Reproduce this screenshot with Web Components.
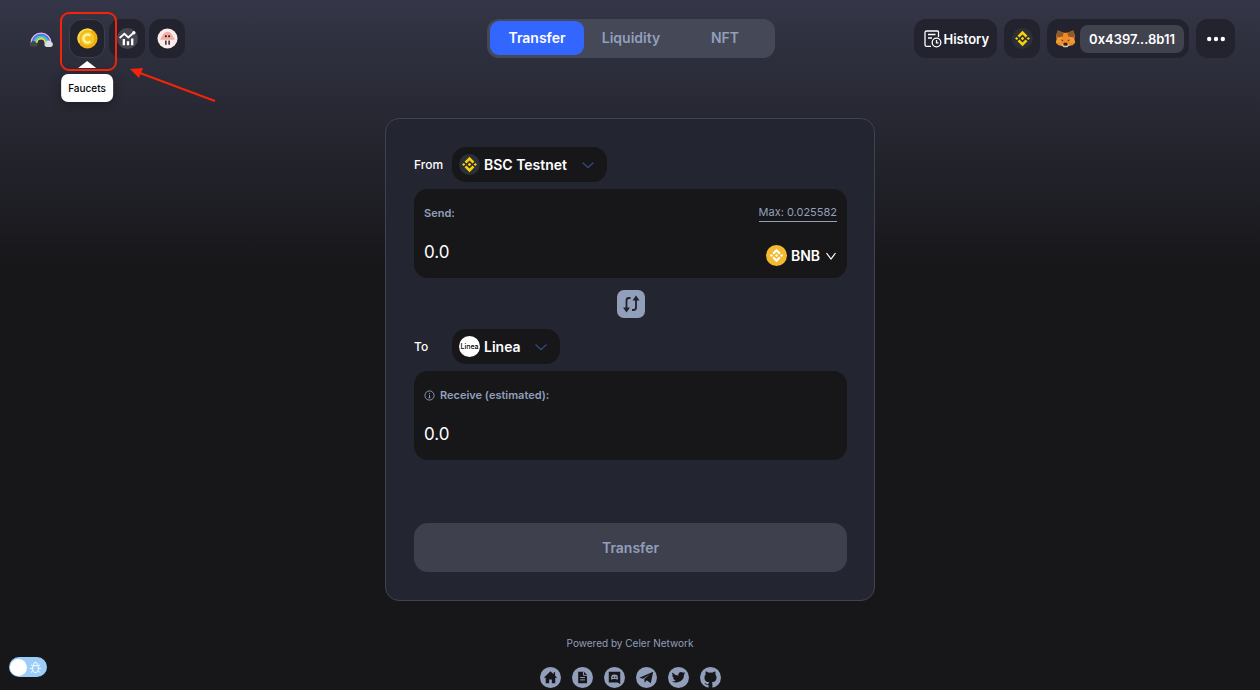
<!DOCTYPE html>
<html lang="en">
<head>
<meta charset="utf-8">
<meta name="viewport" content="width=device-width, initial-scale=1">
<title>cBridge</title>
<style>
  body {
    margin: 0;
    font-family: Inter, "Liberation Sans", sans-serif;
    color: #fff;
    background: #17171a;
  }
</style>
</head>
<body>
<bridge-app></bridge-app>

<script>
const icons = {
  rainbow: `<svg viewBox="0 0 24 18"><g fill="none" stroke-width="1.500"><path d="M2.200 13a9.800 9.800 0 0 1 19.600 0" stroke="#e3b5f7"/><path d="M3.600 13a8.400 8.400 0 0 1 16.800 0" stroke="#4f7bf0"/><path d="M5 13a7 7 0 0 1 14 0" stroke="#3fc3f5"/><path d="M6.400 13a5.600 5.600 0 0 1 11.200 0" stroke="#6fdc9a"/><path d="M7.800 13a4.200 4.200 0 0 1 8.400 0" stroke="#f5e65a"/></g><path d="M2.500 16.500a2.200 2.200 0 0 1-.3-4.300 2.800 2.800 0 0 1 5 .5 2 2 0 0 1 .3 3.800z" fill="#45464b"/><path d="M17.500 17a2.500 2.500 0 0 1-.5-4.800 3 3 0 0 1 5-.5 2.800 2.800 0 0 1 0 5.300z" fill="#dcdde2"/></svg>`,
  coin: `<svg viewBox="0 0 22 22"><circle cx="11" cy="11" r="10.500" fill="#f0b20d"/><path d="M3 4a10.500 10.500 0 0 1 13-2L2 16A10.500 10.500 0 0 1 3 4z" fill="#fbd84b"/><circle cx="11" cy="11" r="8" fill="#f7c524" stroke="#e5a008" stroke-width=".8"/><path d="M14 8a4.200 4.200 0 1 0 0 6" fill="none" stroke="#fff3a8" stroke-width="2.400"/></svg>`,
  chart: `<svg viewBox="0 0 20 20"><circle cx="10" cy="10" r="10" fill="#45464f"/><g fill="none" stroke="#fff"><path d="M2.500 9.500L7 5.500l3.800 3.500 5-4.500" stroke-width="1.700"/><path d="M6.500 10.500v6M10.500 12.500v4M14.500 10v6.500" stroke-width="2.200"/></g><circle cx="16" cy="4.500" r="1.600" fill="#fff"/></svg>`,
  jelly: `<svg viewBox="0 0 22 22"><circle cx="11" cy="11" r="10.500" fill="#fbeceb"/><path d="M6.500 6.500Q8 3.800 11 3.800t4.500 2.700L18.800 12.300H3.200z" fill="#f2aca3"/><path d="M9.300 13v4.500M12.700 13v4.500" stroke="#222" stroke-width="1.500"/><circle cx="9.300" cy="8.700" r="1.100" fill="#222"/><circle cx="12.700" cy="8.700" r="1.100" fill="#222"/></svg>`,
  history: `<svg viewBox="0 0 18 18" fill="none" stroke="#fff" stroke-width="1.300"><path d="M7 16.300H2.500A1.500 1.500 0 0 1 1 14.800V2.500A1.500 1.500 0 0 1 2.500 1h11A1.200 1.200 0 0 1 14.500 2.200V7M4 4.500h7.500M4 8h4"/><circle cx="12.500" cy="12.500" r="4.300"/><path d="M12.500 10v2.800h2"/></svg>`,
  bnbDark: `<svg viewBox="0 0 22 22"><circle cx="11" cy="11" r="11" fill="#2b2f36"/><path d="M7.800 10L11 6.800l3.200 3.200 2-2L11 2.900 5.800 8zM7.800 12L11 15.200l3.200-3.200 2 2L11 19.100 5.800 14zM3.200 11l1.700-1.700L6.600 11l-1.700 1.700zM15.400 11l1.700-1.700 1.700 1.700-1.700 1.700zM11 9.100l1.900 1.900-1.900 1.900L9.100 11z" fill="#f9d10c"/></svg>`,
  bnb: `<svg viewBox="0 0 22 22"><circle cx="11" cy="11" r="11" fill="#f3ba2f"/><path d="M8.300 9.900L11 7.200l2.700 2.700 1.600-1.600L11 4 6.700 8.300zM8.300 12.100l2.700 2.700 2.700-2.700 1.600 1.600L11 18l-4.300-4.300zM4 11l1.600-1.600L7.200 11l-1.600 1.600zM14.800 11l1.600-1.600L18 11l-1.600 1.600zM11 9.400l1.600 1.600-1.600 1.600L9.400 11z" fill="#fff"/></svg>`,
  fox: `<svg viewBox="0 0 22 20"><path d="M3 1.500L9 4h4l6-2.500L21 7l-1 4 1.200 3.500-2.700 2.500-4 .3-1.500 1.700H9l-1.500-1.700-4-.3-2.700-2.500L2 11 1 7z" fill="#ee8a27"/><path d="M3 1.500L9 4 8 9 2.500 9 1 6.500zM19 1.500L13 4l1 5 5.500 0L21 6.500z" fill="#8f5a2c"/><path d="M2 9.500L8 8l-.7 6L1 14.500zM20 9.500L14 8l.7 6 6.300.5z" fill="#f79a32"/><path d="M5.800 11l2.800.6-.5 1.500zM16.200 11l-2.800.6.5 1.500z" fill="#38424e"/><path d="M4.500 16.800l3.500-.6L9 17.800h4l1-1.600 3.500.6-3 .9-1.600 1.500H9.100L7.500 17.700z" fill="#d9c6b7"/><path d="M8.800 15.500l.8-1h2.800l.8 1-.5 1.800H9.300z" fill="#28231f"/></svg>`,
  dots: `<svg viewBox="0 0 20 20" fill="#fff"><circle cx="3.200" cy="10" r="2.200"/><circle cx="10" cy="10" r="2.200"/><circle cx="16.800" cy="10" r="2.200"/></svg>`,
  chevron: `<svg viewBox="0 0 14 14" fill="none" stroke="currentColor" stroke-width="1.300"><path d="M1.500 4.500L7 9.500l5.500-5"/></svg>`,
  chevronSmall: `<svg viewBox="0 0 12 12" fill="none" stroke="currentColor" stroke-width="1.200"><path d="M1.500 3L6 9l4.500-6"/></svg>`,
  swap: `<svg viewBox="0 0 28 28" fill="none" stroke="#20222d" stroke-width="1.800"><path d="M13.500 8H12q-2.500 0-2.500 2.500V18M15 20h1.500q2.500 0 2.500-2.500V10"/><path d="M6 17.500h7l-3.500 5zM15.500 10.500h7l-3.500-5z" fill="#20222d" stroke="none"/></svg>`,
  info: `<svg viewBox="0 0 12 12" fill="none" stroke="currentColor"><circle cx="6" cy="6" r="5"/><path d="M6 5.200v3.300M6 3.200v1.100M5 8.500h2"/></svg>`,
  home: `<path d="M11 4.500l-7 6.700h2V17h3.600v-4h2.800v4H16v-5.800h2l-2.200-2.100V5.500h-1.500v2.100z"/>`,
  doc: `<path d="M6.500 5h6l3.200 3.200V17H6.500z"/><path d="M12 5v3.700h3.700M8.500 11h5M8.500 13.500h5" fill="none" stroke="#929fba"/>`,
  discord: `<path d="M5 5h12v13l-2.500-1.800H5z"/><path d="M7.500 13q-.6-2.800.8-4.700 2.700-.8 5.400 0 1.400 1.900.8 4.700-1 .5-1.800-.4H9.300q-.8.900-1.800.4z" fill="#929fba"/><circle cx="9.600" cy="10.800" r=".8"/><circle cx="12.400" cy="10.800" r=".8"/>`,
  telegram: `<path d="M3.500 11.300L18 5l-2.500 12-4.300-3-2 2.500-.6-3.800 6-5-7.300 4.500z"/>`,
  twitter: `<path d="M4.500 5.800q2.700 3 6.300 3.100c-.4-3.800 3.200-4.700 5-2.900l2-.7-1.100 1.700 1.500-.4-1.500 1.600c.2 6.500-6.600 9.700-12.700 6.900q2.700 0 4-1.300-2.200-.4-2.800-2.200h1.300q-2.100-.9-2.200-3l1.200.3q-1.900-1.600-1-3.100z"/>`,
  github: `<path d="M9 22v-3.200c-3 .6-3.500-1.500-4.500-2 1.700-.3 1.800 1.500 3.300 1.200.5 0 1-.2 1.200-.5l.5-1.500c-3.700-.5-4.800-2.400-4.800-5 0-1.400.5-2.400 1.200-3.200-.3-1-.2-2 .2-3 1.300 0 2.200.7 3 1.200q1.900-.5 3.800 0c.8-.5 1.700-1.200 3-1.200.4 1 .5 2 .2 3 .7.800 1.200 1.800 1.200 3.200 0 2.600-1.100 4.500-4.800 5l.5 1.500V22z"/>`,
  bug: `<svg viewBox="0 0 14 14" fill="none" stroke="#fff"><path d="M4 5h6v4.500a3 3 0 0 1-6 0zM5 5V3.500a2 2 0 0 1 4 0V5M4 8H1M13 8h-3M4 5.500L2 4M10 5.500L12 4M4 10.500L2 12.500M10 10.500l2 2"/></svg>`,
};

const base = `
  *, *::before { box-sizing: border-box; }
  svg { display: block; }
  button, input, select {
    margin: 0; padding: 0; border: 0; background: none;
    font: inherit; color: inherit;
  }
  button { cursor: pointer; }
`;

function define(name, css, html) {
  customElements.define(name, class extends HTMLElement {
    constructor() {
      super();
      this.attachShadow({ mode: "open" });
    }

    connectedCallback() {
      const body = typeof html === "function" ? html(this) : html;
      this.shadowRoot.innerHTML = `<style>${base}${css}</style>${body}`;
    }
  });
}

define("ui-icon", `
  :host { display: block; flex: none; width: 21px; height: 21px; }
  svg { width: 100%; height: 100%; }
`, (el) => icons[el.getAttribute("name")]);

define("icon-button", `
  :host { display: block; }
  button {
    display: flex; align-items: center; justify-content: center; gap: 1px;
    min-width: 36px; height: 39px; padding: 0 6px;
    border-radius: 12px; background: #22232e;
    font-size: 13px; font-weight: 600; line-height: 20px;
  }
  :host([active]) button { border: 1px solid #3d3f4d; }
  :host([wide]) button { min-width: 39px; }
  :host([text]) button { padding: 0 8px; }
`, (el) => `<button type="button" aria-label="${el.getAttribute("label")}"><slot></slot></button>`);

define("app-links", `
  :host { display: flex; align-items: center; gap: 4px; padding-left: 2px; }
  .logo { width: 24px; height: 18px; margin-right: 12px; }
  .faucet { position: relative; }
  .tip {
    position: absolute; top: 55px; left: 50%; transform: translateX(-50%);
    padding: 6px 7px; border-radius: 7px; background: #fff; color: #000;
    font-size: 10px; font-weight: 500; line-height: 16px;
    box-shadow: 0 3px 12px rgba(0, 0, 0, .3);
  }
  .tip::before {
    content: ""; position: absolute; top: -13px; left: 50%; margin-left: -9px;
    border: 9px solid transparent; border-top: 0; border-bottom: 7px solid #fff;
  }
  .mark {
    position: absolute; top: -7px; left: -9px; width: 57px; height: 59px;
    border: 2px solid #f5230a; border-radius: 9px; z-index: 1;
  }
  .arrow { position: absolute; top: 48px; left: 61px; width: 88px; height: 36px; }
`, `
  <ui-icon class="logo" name="rainbow"></ui-icon>
  <div class="faucet">
    <icon-button active label="Faucets"><ui-icon name="coin"></ui-icon></icon-button>
    <div class="tip" role="tooltip">Faucets</div>
    <div class="mark"></div>
    <svg class="arrow" viewBox="0 0 88 36"><path d="M10 6l75 28" stroke="#f5230a" stroke-width="2"/><path d="M0 2l13-1-4 10z" fill="#f5230a"/></svg>
  </div>
  <icon-button label="Analytics"><ui-icon name="chart"></ui-icon></icon-button>
  <icon-button label="Jellyfish"><ui-icon name="jelly"></ui-icon></icon-button>
`);

define("nav-tabs", `
  :host {
    display: grid; grid-template-columns: repeat(3, 94px);
    padding: 2px 3px 3px; border-radius: 12px; background: #444857;
  }
  button {
    height: 34px; border-radius: 9px; color: #929fba;
    font-size: 14px; font-weight: 600; line-height: 20px;
  }
  .on { background: #3366ff; color: #fff; }
`, `
  <button type="button" class="on">Transfer</button>
  <button type="button">Liquidity</button>
  <button type="button">NFT</button>
`);

define("wallet-bar", `
  :host { display: flex; justify-content: flex-end; gap: 7px; }
  .history { width: 18px; height: 18px; margin-left: 2px; }
  .wallet {
    display: flex; align-items: center; gap: 4px; height: 39px;
    padding: 0 5px 0 8px; border-radius: 12px; background: #22232e;
  }
  .account {
    height: 28px; padding: 0 9px; border-radius: 8px; background: #40424e;
    font-size: 13px; font-weight: 600; line-height: 20px;
  }
  .dots { width: 20px; height: 20px; }
`, `
  <icon-button text label="History"><ui-icon class="history" name="history"></ui-icon>History</icon-button>
  <icon-button label="Network"><ui-icon name="bnbDark"></ui-icon></icon-button>
  <div class="wallet">
    <ui-icon name="fox"></ui-icon>
    <button type="button" class="account">0x4397...8b11</button>
  </div>
  <icon-button wide label="More"><ui-icon class="dots" name="dots"></ui-icon></icon-button>
`);

define("chain-row", `
  :host { display: flex; align-items: center; }
  .name { width: 38px; font-size: 12px; font-weight: 500; line-height: 20px; }
  .pill {
    display: flex; align-items: center; gap: 4px; height: 35px;
    padding: 0 12px 0 7px; border-radius: 14px; background: #17171a;
  }
  select { appearance: none; font-size: 14px; font-weight: 600; line-height: 20px; }
  .down { width: 14px; height: 14px; margin-left: 9px; color: #36467a; }
`, (el) => `
  <label class="name" for="chain">${el.getAttribute("label")}</label>
  <div class="pill">
    <slot></slot>
    <select id="chain"><option>${el.getAttribute("chain")}</option></select>
    <ui-icon class="down" name="chevron"></ui-icon>
  </div>
`);

define("amount-box", `
  :host {
    display: flex; justify-content: space-between; height: 89px;
    padding: 15px 10px 12px; border-radius: 14px; background: #17171a;
  }
  .left { display: flex; flex: 1; flex-direction: column; justify-content: space-between; min-width: 0; }
  label {
    display: flex; align-items: center; gap: 5px; color: #929fba;
    font-size: 11px; font-weight: 600; line-height: 18px;
  }
  input { width: 100%; height: 28px; outline: 0; font-size: 17px; line-height: 28px; }
`, (el) => `
  <div class="left">
    <label for="amount"><slot name="icon"></slot>${el.getAttribute("label")}</label>
    <input id="amount" type="text" value="0.0"${el.hasAttribute("readonly") ? " readonly" : ""}>
  </div>
  <slot name="side"></slot>
`);

define("token-side", `
  :host { display: flex; flex-direction: column; align-items: flex-end; justify-content: space-between; }
  .max {
    border-bottom: 1px solid #929fba; color: #929fba;
    font-size: 11px; line-height: 17px;
  }
  .token { display: flex; align-items: center; gap: 4px; }
  select { appearance: none; font-size: 14px; font-weight: 600; line-height: 20px; }
  .down { width: 12px; height: 12px; }
`, `
  <button type="button" class="max">Max: 0.025582</button>
  <div class="token">
    <ui-icon name="bnb"></ui-icon>
    <select aria-label="Token"><option>BNB</option></select>
    <ui-icon class="down" name="chevronSmall"></ui-icon>
  </div>
`);

define("transfer-card", `
  :host {
    display: flex; flex-direction: column; box-sizing: border-box;
    width: 100%; max-width: 490px;
    padding: 28px 27px 28px 28px; border: 1px solid #40424e; border-radius: 14px;
    background: #232530;
  }
  amount-box { margin-top: 7px; }
  .swap {
    align-self: center; width: 28px; height: 28px; margin: 12px 0 11px;
    border-radius: 7px; background: #929fba;
  }
  .swap ui-icon { width: 28px; height: 28px; }
  .info { width: 11px; height: 11px; }
  .linea {
    display: grid; place-items: center; width: 21px; height: 21px;
    border-radius: 50%; background: #fff; color: #000;
    font-size: 7px; font-weight: 500; line-height: 8px;
  }
  .submit {
    height: 49px; margin-top: 63px; border-radius: 14px;
    background: #3e404e; color: #929fba;
    font-size: 14px; font-weight: 600; line-height: 20px;
  }
`, `
  <chain-row label="From" chain="BSC Testnet"><ui-icon name="bnbDark"></ui-icon></chain-row>
  <amount-box label="Send:"><token-side slot="side"></token-side></amount-box>
  <button type="button" class="swap" aria-label="Swap chains"><ui-icon name="swap"></ui-icon></button>
  <chain-row label="To" chain="Linea"><span class="linea">Linea</span></chain-row>
  <amount-box label="Receive (estimated):" readonly><ui-icon class="info" slot="icon" name="info"></ui-icon></amount-box>
  <button type="button" class="submit">Transfer</button>
`);

const socials = ["home", "doc", "discord", "telegram", "twitter", "github"];

define("page-footer", `
  :host { display: flex; flex-direction: column; align-items: center; gap: 16px; color: #929fba; }
  p { margin: 0; font-size: 10px; line-height: 16px; }
  nav { display: flex; gap: 11px; }
  a { display: block; width: 21px; height: 21px; }
  a svg { width: 100%; height: 100%; fill: #17171a; }
`, `
  <p>Powered by Celer Network</p>
  <nav>
    ${socials.map((name) => `
      <a href="#${name}" aria-label="${name}">
        <svg viewBox="0 0 22 22"><circle cx="11" cy="11" r="11" fill="#929fba"/>${icons[name]}</svg>
      </a>`).join("")}
  </nav>
`);

define("debug-toggle", `
  :host { position: fixed; left: 9px; bottom: 13px; }
  label {
    display: flex; align-items: center; justify-content: space-between;
    width: 38px; height: 20px; padding: 0 5px 0 1px;
    border-radius: 10px; background: #9bcdf8;
  }
  input { appearance: none; width: 17px; height: 17px; border-radius: 50%; background: #fff; }
  ui-icon { width: 13px; height: 13px; }
`, `
  <label aria-label="Debug"><input type="checkbox" aria-label="Debug"><ui-icon name="bug"></ui-icon></label>
`);

define("bridge-app", `
  :host {
    display: flex; flex-direction: column; align-items: center; min-height: 100vh;
    background: linear-gradient(#343546, #17171a 265px);
  }
  header {
    display: grid; grid-template-columns: 1fr auto 1fr; align-items: center;
    width: 100%; padding: 19px 25px 0 27px;
  }
  transfer-card { margin-top: 60px; }
  page-footer { margin-top: 34px; }
`, `
  <header>
    <app-links></app-links>
    <nav-tabs></nav-tabs>
    <wallet-bar></wallet-bar>
  </header>
  <transfer-card></transfer-card>
  <page-footer></page-footer>
  <debug-toggle></debug-toggle>
`);
</script>
</body>
</html>
